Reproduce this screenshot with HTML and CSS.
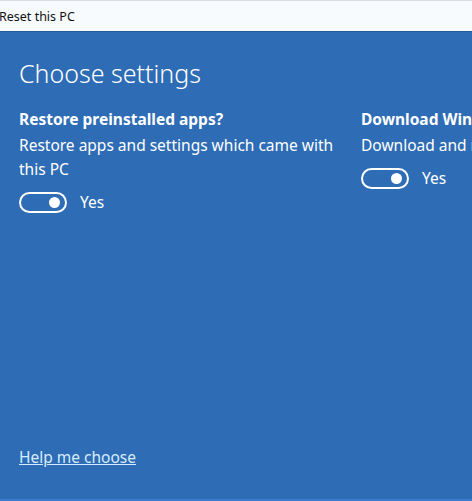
FILE: index.html
```html
<!DOCTYPE html>
<html lang="en">
<head>
<meta charset="utf-8">
<title>Reset this PC</title>
<link rel="stylesheet" href="styles.css">
</head>
<body>
<div class="window">
  <header class="titlebar">Reset this PC</header>
  <main class="panel">
    <h1 class="heading">Choose settings</h1>
    <div class="options">
      <section class="option">
        <h2 class="option-title">Restore preinstalled apps?</h2>
        <p class="option-desc">Restore apps and settings which came with this PC</p>
        <div class="toggle-row">
          <span class="toggle"><span class="knob"></span></span>
          <span class="toggle-label">Yes</span>
        </div>
      </section>
      <section class="option">
        <h2 class="option-title">Download Windows?</h2>
        <p class="option-desc">Download and reinstall Windows</p>
        <div class="toggle-row">
          <span class="toggle"><span class="knob"></span></span>
          <span class="toggle-label">Yes</span>
        </div>
      </section>
    </div>
    <a class="help" href="#">Help me choose</a>
  </main>
</div>
</body>
</html>
```
FILE: styles.css
```css
html, body {
  margin: 0;
  padding: 0;
  width: 472px;
  height: 501px;
  overflow: hidden;
}
body {
  font-family: "Noto Sans", "Open Sans", sans-serif;
  background: #2e6cb5;
}
.window {
  display: flex;
  flex-direction: column;
  height: 501px;
  width: 472px;
}
.titlebar {
  height: 32px;
  box-sizing: border-box;
  border-top: 1px solid #d8dde3;
  background: #f8fbfe;
  color: #111;
  font-size: 12.5px;
  line-height: 31px;
  padding-left: 0;
  margin-left: -1px;
  white-space: nowrap;
  border-bottom: 1px solid #2559a0;
}
.panel {
  flex: 1;
  display: flex;
  flex-direction: column;
  padding: 0 0 0 19px;
  color: #fff;
  border-bottom: 2px solid #3d7ccc;
  overflow: hidden;
}
.heading {
  margin: 21px 0 0 0;
  font-weight: 300;
  font-size: 25px;
  line-height: 40px;
}
.options {
  display: grid;
  grid-template-columns: 342px 342px;
  margin-top: 13px;
}
.option-title {
  margin: 0;
  font-size: 15.5px;
  font-weight: 700;
  line-height: 27px;
  white-space: nowrap;
}
.option-desc {
  margin: 0;
  font-size: 15.5px;
  line-height: 24px;
  width: 320px;
}
.option:last-child .option-desc { white-space: nowrap; }
.toggle-row {
  display: flex;
  align-items: center;
  gap: 13px;
  margin-top: 10px;
}
.toggle {
  width: 48px;
  height: 21px;
  box-sizing: border-box;
  border: 2px solid #fff;
  border-radius: 11px;
  display: flex;
  align-items: center;
  justify-content: flex-end;
  padding-right: 5px;
}
.knob {
  width: 11px;
  height: 11px;
  border-radius: 50%;
  background: #fff;
}
.toggle-label {
  font-size: 15.5px;
}
.help {
  margin-top: auto;
  margin-bottom: 31px;
  color: #d6ecff;
  font-size: 15.5px;
  text-decoration: underline;
  align-self: flex-start;
}
```
